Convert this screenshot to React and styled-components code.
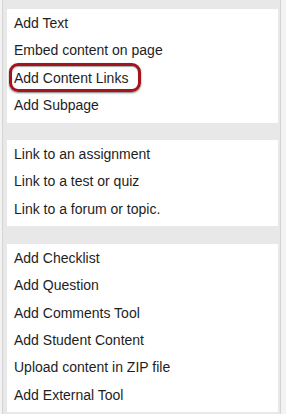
import React from 'react';
import styled, { createGlobalStyle } from 'styled-components';

const GlobalStyle = createGlobalStyle`
  html, body {
    margin: 0;
    padding: 0;
    background: #f3f3f3;
  }
`;

const Frame = styled.div`
  position: relative;
  margin-left: 2px;
  width: 279px;
  height: 414px;
  box-sizing: border-box;
  background: #e8e8e8;
  border-left: 1px solid #d4d4d4;
  border-right: 1px solid #d4d4d4;
  padding: 9px 2px 0 4px;
  display: flex;
  flex-direction: column;
  gap: 17.5px;
  font-family: "Liberation Sans", Arial, sans-serif;
`;

const Panel = styled.ul`
  list-style: none;
  margin: 0;
  padding: 1px 0 3px;
  background: #fff;
`;

const Item = styled.li`
  height: 27.4px;
  line-height: 27.4px;
  padding-left: 7px;
  font-size: 14px;
  color: #1e1e1e;
  white-space: nowrap;
`;

const Highlight = styled.div`
  position: absolute;
  left: 6px;
  top: 63px;
  width: 132px;
  height: 29px;
  box-sizing: border-box;
  border: 3.5px solid #a3151d;
  border-radius: 9px;
  box-shadow: 0 1px 2px rgba(0, 0, 0, 0.5), inset 0 1px 1px rgba(0, 0, 0, 0.35);
  pointer-events: none;
`;

const groups = [
  ['Add Text', 'Embed content on page', 'Add Content Links', 'Add Subpage'],
  ['Link to an assignment', 'Link to a test or quiz', 'Link to a forum or topic.'],
  [
    'Add Checklist',
    'Add Question',
    'Add Comments Tool',
    'Add Student Content',
    'Upload content in ZIP file',
    'Add External Tool',
  ],
];

export default function App() {
  return (
    <>
      <GlobalStyle />
      <Frame>
        {groups.map((items, i) => (
          <Panel key={i}>
            {items.map((label) => (
              <Item key={label}>{label}</Item>
            ))}
          </Panel>
        ))}
        <Highlight />
      </Frame>
    </>
  );
}
